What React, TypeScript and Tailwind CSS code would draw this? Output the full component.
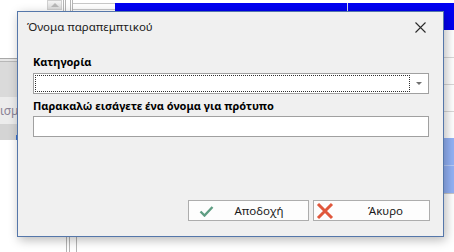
import React from 'react';

const font = { fontFamily: '"Noto Sans", "Open Sans", sans-serif' };

function CheckIcon() {
  return (
    <svg width="15" height="12" viewBox="0 0 15 12" className="shrink-0">
      <path d="M1.5 6.5 L5.5 10.5 L13.5 2" fill="none" stroke="#5e9d82" strokeWidth="2.4" />
    </svg>
  );
}

function CrossIcon() {
  return (
    <svg width="18" height="18" viewBox="0 0 18 18" className="shrink-0">
      <path d="M2 2 L16 16 M16 2 L2 16" fill="none" stroke="#e0573c" strokeWidth="3" />
    </svg>
  );
}

function Background() {
  return (
    <div className="absolute inset-0 bg-white">
      {/* top strip */}
      <div className="absolute left-0 top-0 h-[11px] w-[454px] flex">
        <div className="w-[47px] bg-white" />
        <div className="w-[15px] h-[10px] bg-gradient-to-b from-[#f4f4f4] to-[#dcdcdc] border border-[#d0d0d0] flex items-start justify-center">
          <div className="mt-[2px] w-0 h-0 border-l-[4px] border-r-[4px] border-b-[4px] border-l-transparent border-r-transparent border-b-[#b8b8b8]" />
        </div>
        <div className="w-[1px]" />
        <div className="w-[3px] border-l border-r border-[#b5b5b5]" />
        <div className="w-[4px]" />
        <div className="w-[3px] border-l border-r border-[#b5b5b5]" />
        <div className="w-[42px] border-t border-b border-[#c8c8c8] mt-[3px] h-[7px]" />
        <div className="flex-1 bg-[#0000f2] mt-[3px] h-[27px] relative">
          <div className="absolute left-[232px] top-0 w-[1px] h-[9px] bg-[#d8d8e8]" />
        </div>
      </div>
      {/* left column fragment */}
      <div className="absolute left-0 top-[58px] w-[17px] flex flex-col">
        <div className="h-[1px] bg-[#a8a8a8]" />
        <div className="h-[2px] bg-[#e6e6e6]" />
        <div className="h-[1px] bg-[#b8b8b8]" />
        <div className="h-[35px] bg-[#dadada]" />
        <div className="h-[27px] bg-[#ececec] flex items-center text-[12px] text-[#8a8296] leading-none overflow-hidden" style={font}>
          <span className="whitespace-nowrap">ισμ</span>
        </div>
        <div className="h-[16px] bg-[#d4d4d4]" />
      </div>
      <div className="absolute left-[16px] top-[135px] w-[1px] h-[5px] bg-[#3a6fd0]" />
      {/* right column fragment */}
      <div className="absolute left-[444px] top-[30px] w-[10px] flex flex-col">
        <div className="h-[27px]" />
        <div className="h-[1px] bg-[#d8d8d8]" />
        <div className="h-[26px]" />
        <div className="h-[1px] bg-[#d8d8d8]" />
        <div className="h-[26px]" />
        <div className="h-[1px] bg-[#d8d8d8]" />
        <div className="h-[26px]" />
        <div className="h-[27px] bg-[#93b2f6]" />
        <div className="h-[1px] bg-[#b9cdf8]" />
        <div className="h-[27px] bg-[#93b2f6]" />
        <div className="h-[1px] bg-[#c8c8c8]" />
      </div>
      {/* bottom lines */}
      <div className="absolute left-[66px] top-[236px] h-[16px] flex gap-[2px]">
        <div className="w-[1px] bg-[#b5b5b5]" />
        <div className="w-[1px] bg-[#b5b5b5]" />
        <div className="w-[2px]" />
        <div className="w-[1px] bg-[#b5b5b5]" />
      </div>
    </div>
  );
}

export default function App() {
  return (
    <div className="relative w-[454px] h-[252px] overflow-hidden bg-white" style={font}>
      <Background />
      <div className="absolute left-[17px] top-[11px] w-[427px] h-[226px] bg-[#f0f0f0] border border-[#5577aa] shadow-[2px_3px_10px_rgba(0,0,0,0.28)] flex flex-col text-[11px] text-[#1a1a1a]">
        <div className="h-[30px] flex items-center pl-[9px] pr-[17px]">
          <span className="flex-1 leading-none text-[11.5px]">Όνομα παραπεμπτικού</span>
          <svg width="11" height="11" viewBox="0 0 11 11">
            <path d="M0.5 0.5 L10.5 10.5 M10.5 0.5 L0.5 10.5" stroke="#2a2a2a" strokeWidth="1.1" fill="none" />
          </svg>
        </div>
        <div className="pl-[15px] flex flex-col">
          <div className="mt-[12px] h-[16px] leading-[16px] font-bold text-[11px] text-black">Κατηγορία</div>
          <div className="mt-[3px] w-[396px] h-[21px] bg-white border border-[#a0a0a0] flex items-center p-[1px]">
            <div className="h-full flex-1 border border-dotted border-[#303030]" />
            <div className="w-[17px] flex items-center justify-center">
              <div className="w-0 h-0 border-l-[3px] border-r-[3px] border-t-[3px] border-l-transparent border-r-transparent border-t-[#707070]" />
            </div>
          </div>
          <div className="mt-[4px] h-[16px] leading-[16px] font-bold text-[11px] text-black">
            Παρακαλώ εισάγετε ένα όνομα για πρότυπο
          </div>
          <div className="mt-[2px] w-[396px] h-[21px] bg-white border border-[#a0a0a0]" />
        </div>
        <div className="mt-auto pb-[15px] pr-[13px] flex justify-end gap-[4px]">
          <button className="w-[121px] h-[21px] bg-[#fdfdfd] border border-[#adadad] flex items-center pl-[10px] text-[11.5px] text-[#1a1a1a]">
            <CheckIcon />
            <span className="flex-1 text-center pr-[4px] leading-none">Αποδοχή</span>
          </button>
          <button className="w-[117px] h-[21px] bg-[#fdfdfd] border border-[#adadad] flex items-center pl-[2px] text-[11.5px] text-[#1a1a1a]">
            <CrossIcon />
            <span className="flex-1 text-center pl-[8px] leading-none">Άκυρο</span>
          </button>
        </div>
      </div>
    </div>
  );
}
